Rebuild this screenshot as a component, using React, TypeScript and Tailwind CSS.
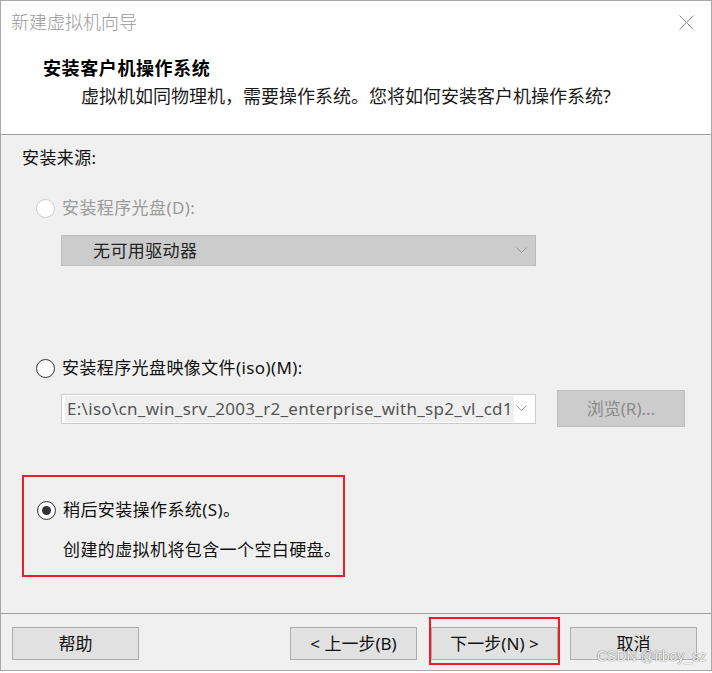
import React from 'react';

const font = "font-['Noto_Sans','Noto_Sans_CJK_SC',sans-serif]";

// windows-style radio button
const Radio = ({ checked = false, disabled = false }: { checked?: boolean; disabled?: boolean }) => (
  <span
    className={`flex h-[19px] w-[19px] shrink-0 items-center justify-center rounded-full border bg-white ${
      disabled ? 'border-[#cccccc]' : 'border-[#333333]'
    }`}
  >
    {checked && <span className="h-[9px] w-[9px] rounded-full bg-[#333333]" />}
  </span>
);

const Chevron = ({ color = '#8a8a8a' }: { color?: string }) => (
  <svg width="11" height="7" viewBox="0 0 11 7" fill="none">
    <path d="M0.5 0.5 L5.5 5.5 L10.5 0.5" stroke={color} strokeWidth="1" />
  </svg>
);

const FooterButton = ({ children }: { children: React.ReactNode }) => (
  <button className="flex h-[33px] w-[127px] items-center justify-center border border-[#adadad] bg-[#e1e1e1] text-[17px] text-[#111]">
    {children}
  </button>
);

export default function App() {
  return (
    <div className={`relative h-[673px] w-[712px] overflow-hidden bg-white ${font}`}>
      <div className="flex h-[671px] w-[712px] flex-col border border-[#a9a9a9]">
        {/* title bar */}
        <div className="flex h-[43px] shrink-0 items-center justify-between bg-white pl-[10px] pr-[17px]">
          <span className="text-[18px] font-light text-[#999999]">新建虚拟机向导</span>
          <svg width="15" height="15" viewBox="0 0 15 15">
            <path d="M0.5 0.5 L14.5 14.5 M14.5 0.5 L0.5 14.5" stroke="#8c8c8c" strokeWidth="1" />
          </svg>
        </div>

        {/* header */}
        <div className="h-[91px] shrink-0 border-b border-[#a0a0a0] bg-white pl-[42px] pt-[13px]">
          <div className="text-[18px] font-bold leading-[22px] tracking-[0.6px] text-black">安装客户机操作系统</div>
          <div className="ml-[38px] mt-[6px] text-[18px] leading-[22px] text-[#1a1a1a]">
            虚拟机如同物理机，需要操作系统。您将如何安装客户机操作系统?
          </div>
        </div>

        {/* body */}
        <div className="flex flex-1 flex-col bg-[#f0f0f0] pl-[21px] pt-[12px]">
          <div className="text-[17px] leading-[22px] tracking-[0.4px] text-[#111]">安装来源:</div>

          <div className="ml-[14px] mt-[28px] flex h-[22px] items-center gap-[7px]">
            <Radio disabled />
            <span className="text-[17px] tracking-[0.4px] text-[#9a9a9a]">安装程序光盘(D):</span>
          </div>

          <div className="ml-[39px] mt-[16px] flex h-[31px] w-[475px] items-center justify-between border border-[#bdbdbd] bg-[#cccccc] pl-[31px] pr-[8px]">
            <span className="text-[17px] tracking-[0.4px] text-[#222]">无可用驱动器</span>
            <Chevron color="#9a9a9a" />
          </div>

          <div className="ml-[14px] mt-[91px] flex h-[22px] items-center gap-[7px]">
            <Radio />
            <span className="text-[17px] tracking-[0.4px] text-[#111]">安装程序光盘映像文件(iso)(M):</span>
          </div>

          <div className="mt-[11px] flex h-[37px] items-center">
            <div className="ml-[39px] flex h-[30px] w-[475px] items-center border border-[#cccccc] bg-white pl-[3px] pr-[8px]">
              <div className="whitespace-nowrap bg-[#efefef] pl-[2px] pr-[1px] text-[17px] leading-[26px] tracking-[0.3px] text-[#555555]">
                E:\iso\cn_win_srv_2003_r2_enterprise_with_sp2_vl_cd1
              </div>
              <div className="ml-auto">
                <Chevron color="#9a9a9a" />
              </div>
            </div>
            <div className="ml-[21px] flex h-[37px] w-[128px] items-center justify-center border border-[#bdbdbd] bg-[#cccccc] text-[17px] text-[#8a8a8a]">
              浏览(R)...
            </div>
          </div>

          {/* red annotation around the selected option */}
          <div className="mt-[48px] h-[102px] w-[323px] border-2 border-[#ee1c25] pl-[13px] pt-[22px]">
            <div className="flex h-[22px] items-center gap-[7px]">
              <Radio checked />
              <span className="text-[17px] tracking-[0.4px] text-[#111]">稍后安装操作系统(S)。</span>
            </div>
            <div className="ml-[26px] mt-[18px] text-[17px] leading-[22px] tracking-[0.4px] text-[#111]">
              创建的虚拟机将包含一个空白硬盘。
            </div>
          </div>
        </div>

        {/* footer */}
        <div className="flex h-[57px] shrink-0 items-start border-t border-[#a0a0a0] bg-[#f0f0f0] pl-[11px] pt-[13px]">
          <FooterButton>帮助</FooterButton>
          <div className="ml-[151px]">
            <FooterButton>&lt; 上一步(B)</FooterButton>
          </div>
          <div className="ml-[14px]">
            <FooterButton>下一步(N) &gt;</FooterButton>
          </div>
          <div className="ml-[12px]">
            <FooterButton>取消</FooterButton>
          </div>
        </div>
      </div>

      {/* annotation around next button */}
      <div className="absolute left-[429px] top-[617px] h-[48px] w-[131px] border-2 border-[#ee1c25]" />

      {/* watermark */}
      <div className="absolute left-[597px] top-[648px] font-['Liberation_Sans',sans-serif] text-[14px] leading-[16px] text-[#f4f4f4] [text-shadow:0_0_1px_#777,0_0_1px_#777]">
        CSDN @itboy_sz
      </div>
    </div>
  );
}
